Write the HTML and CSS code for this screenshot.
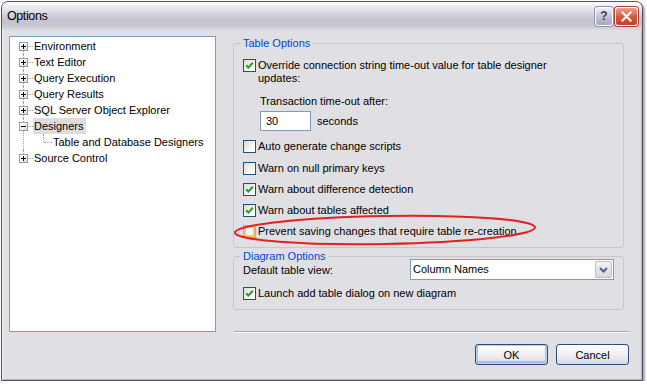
FILE: index.html
```html
<!DOCTYPE html>
<html>
<head>
<meta charset="utf-8">
<title>Options</title>
<link rel="stylesheet" href="styles.css">
</head>
<body>
<div class="window">
  <div class="titlebar">
    <span class="title">Options</span>
    <div class="caption-buttons">
      <span class="cap help">?</span>
      <span class="cap close"><svg width="11" height="11" viewBox="0 0 11 11"><path d="M1.5 1.5 L9.5 9.5 M9.5 1.5 L1.5 9.5" stroke="#fff" stroke-width="2.2" stroke-linecap="square"/></svg></span>
    </div>
  </div>
  <div class="content">
    <ul class="tree">
      <li class="node first"><span class="exp plus"></span><span class="label">Environment</span></li>
      <li class="node"><span class="exp plus"></span><span class="label">Text Editor</span></li>
      <li class="node"><span class="exp plus"></span><span class="label">Query Execution</span></li>
      <li class="node"><span class="exp plus"></span><span class="label">Query Results</span></li>
      <li class="node"><span class="exp plus"></span><span class="label">SQL Server Object Explorer</span></li>
      <li class="node open"><span class="exp minus"></span><span class="label selected">Designers</span>
        <ul class="children">
          <li class="leaf"><span class="label">Table and Database Designers</span></li>
        </ul>
      </li>
      <li class="node last"><span class="exp plus"></span><span class="label">Source Control</span></li>
    </ul>
    <div class="pane">
      <fieldset class="group table-group">
        <legend>Table Options</legend>
        <div class="check-row">
          <span class="cb checked"><svg width="11" height="11" viewBox="0 0 11 11"><path d="M2.2 5.2 L4.4 7.6 L8.8 2.8" fill="none" stroke="#21a121" stroke-width="2"/></svg></span>
          <span class="cb-label">Override connection string time-out value for table designer<br>updates:</span>
        </div>
        <div class="sub-label">Transaction time-out after:</div>
        <div class="timeout-row">
          <span class="num">30</span>
          <span class="unit">seconds</span>
        </div>
        <div class="check-row first-plain">
          <span class="cb"></span>
          <span class="cb-label">Auto generate change scripts</span>
        </div>
        <div class="check-row second-plain">
          <span class="cb"></span>
          <span class="cb-label">Warn on null primary keys</span>
        </div>
        <div class="check-row">
          <span class="cb checked"><svg width="11" height="11" viewBox="0 0 11 11"><path d="M2.2 5.2 L4.4 7.6 L8.8 2.8" fill="none" stroke="#21a121" stroke-width="2"/></svg></span>
          <span class="cb-label">Warn about difference detection</span>
        </div>
        <div class="check-row">
          <span class="cb checked"><svg width="11" height="11" viewBox="0 0 11 11"><path d="M2.2 5.2 L4.4 7.6 L8.8 2.8" fill="none" stroke="#21a121" stroke-width="2"/></svg></span>
          <span class="cb-label">Warn about tables affected</span>
        </div>
        <div class="check-row">
          <span class="cb hot"></span>
          <span class="cb-label">Prevent saving changes that require table re-creation</span>
        </div>
      </fieldset>
      <fieldset class="group diagram-group">
        <legend>Diagram Options</legend>
        <div class="select-row">
          <span class="select-label">Default table view:</span>
          <div class="select">
            <span class="select-value">Column Names</span>
            <span class="select-btn"><svg width="9" height="6" viewBox="0 0 9 6"><path d="M1 1 L4.5 4.5 L8 1" fill="none" stroke="#4d6185" stroke-width="2"/></svg></span>
          </div>
        </div>
        <div class="check-row launch-row">
          <span class="cb checked"><svg width="11" height="11" viewBox="0 0 11 11"><path d="M2.2 5.2 L4.4 7.6 L8.8 2.8" fill="none" stroke="#21a121" stroke-width="2"/></svg></span>
          <span class="cb-label">Launch add table dialog on new diagram</span>
        </div>
      </fieldset>
      <div class="separator"></div>
      <div class="buttons">
        <span class="btn default">OK</span>
        <span class="btn">Cancel</span>
      </div>
      <svg class="callout" width="396" height="300" viewBox="0 0 396 300"><ellipse cx="152" cy="194" rx="150" ry="14" transform="rotate(-1 152 194)" fill="none" stroke="#e3211e" stroke-width="2"/></svg>
    </div>
  </div>
</div>
</body>
</html>
```

FILE: styles.css
```css
* { box-sizing: border-box; }
html, body { margin: 0; padding: 0; background: #fff; }
body {
  font-family: "Liberation Sans", Arial, sans-serif;
  font-size: 11px;
  color: #000;
}

.window {
  margin: 1px 0 0 1px;
  width: 642px;
  height: 380px;
  border: 1px solid #50506a;
  border-radius: 7px 7px 0 0;
  background: #e0dfe3;
  box-shadow: 2px 2px 2px rgba(0, 0, 0, 0.35), inset 1px 0 0 #f4f4f7, inset -1px -1px 0 #b4b4c0;
  display: flex;
  flex-direction: column;
  overflow: hidden;
}

.titlebar {
  height: 28px;
  flex: none;
  display: flex;
  align-items: center;
  padding: 0 4px 0 5px;
  background: linear-gradient(to bottom, #fdfdfe 0%, #ececf1 18%, #d2d2dc 45%, #c3c3d0 65%, #c9c9d5 85%, #d9d9e1 100%);
  border-radius: 6px 6px 0 0;
}
.title {
  font-size: 12.5px;
  letter-spacing: -0.4px;
  color: #000;
  flex: 1;
}
.caption-buttons { display: flex; gap: 2px; }
.cap {
  height: 19px;
  border-radius: 3px;
  display: flex;
  align-items: center;
  justify-content: center;
}
.help {
  width: 18px;
  border: 1px solid #fff;
  background: linear-gradient(to bottom, #eeeef4, #bcbdcf 60%, #a7a9bf);
  box-shadow: 0 0 0 1px #8f91a8;
  color: #3a3d55;
  font-weight: bold;
  font-size: 12px;
}
.close {
  width: 23px;
  border: 1px solid #fff;
  background: linear-gradient(to bottom, #ee9c88, #d6563c 55%, #c2412a);
  box-shadow: 0 0 0 1px #a2403a;
}

.content {
  flex: 1;
  display: flex;
  align-items: flex-start;
  padding: 6px 0 0 7px;
}

/* tree */
.tree {
  list-style: none;
  margin: 0;
  padding: 1px 0 0 0;
  width: 207px;
  height: 296px;
  flex: none;
  background: #fff;
  border: 1px solid #7f9db9;
}
.tree ul { list-style: none; margin: 0; padding: 0; }
.node {
  position: relative;
  padding-left: 23px;
  line-height: 16px;
}
.label {
  display: inline-block;
  height: 16px;
  padding: 0 2px 0 1px;
  white-space: nowrap;
}
.label.selected { background: #dddde0; }
.node::before {
  content: "";
  position: absolute;
  left: 13px;
  top: 0;
  bottom: 0;
  border-left: 1px dotted #a0a0a0;
}
.node.first::before { top: 8px; }
.node.last::before { bottom: auto; height: 8px; }
.node::after {
  content: "";
  position: absolute;
  left: 18px;
  top: 8px;
  width: 5px;
  border-top: 1px dotted #a0a0a0;
}
.exp {
  position: absolute;
  left: 9px;
  top: 4px;
  width: 9px;
  height: 9px;
  z-index: 1;
  border: 1px solid #8e9fb0;
  background: linear-gradient(135deg, #ffffff 30%, #d9d8d2);
}
.exp::before {
  content: "";
  position: absolute;
  left: 1px;
  top: 3px;
  width: 5px;
  height: 1px;
  background: #000;
}
.exp.plus::after {
  content: "";
  position: absolute;
  left: 3px;
  top: 1px;
  width: 1px;
  height: 5px;
  background: #000;
}
.children { margin-left: -23px !important; }
.leaf {
  position: relative;
  padding-left: 42px;
  line-height: 16px;
}
.leaf::before {
  content: "";
  position: absolute;
  left: 33px;
  top: 0;
  height: 8px;
  border-left: 1px dotted #a0a0a0;
}
.leaf::after {
  content: "";
  position: absolute;
  left: 34px;
  top: 8px;
  width: 8px;
  border-top: 1px dotted #a0a0a0;
}

/* right pane */
.pane {
  position: relative;
  margin-left: 17px;
  width: 396px;
  display: flex;
  flex-direction: column;
  padding-top: 1px;
}
.group {
  margin: 0;
  width: 391px;
  border: 1px solid #c7c7cb;
  border-radius: 3px;
  min-width: 0;
}
.group legend {
  color: #0046d5;
  padding: 0 3px;
  margin-left: -3px;
  line-height: 13px;
}
.table-group { padding: 9px 9px 9px 9px; }
.diagram-group { margin-top: 2px; padding: 0 9px 9px 9px; }

.check-row {
  display: flex;
  align-items: flex-start;
  gap: 2px;
  line-height: 13px;
  margin-top: 8px;
}
.table-group .check-row:first-of-type { margin-top: 0; }
.check-row.first-plain { margin-top: 9px; }
.check-row.second-plain { margin-top: 9px; }
.cb {
  width: 13px;
  height: 13px;
  flex: none;
  border: 1px solid #1c5180;
  background: linear-gradient(135deg, #dcdcd5, #ffffff 85%);
  display: flex;
  align-items: center;
  justify-content: center;
}
.cb.hot {
  border-color: #c9a978;
  background: linear-gradient(135deg, #e6e4dc, #ffffff 85%);
  box-shadow: inset 0 0 0 2px #f9c674;
}
.cb-label { white-space: nowrap; }

.sub-label {
  margin-top: 10px;
  padding-left: 17px;
  line-height: 13px;
}
.timeout-row {
  margin-top: 3px;
  padding-left: 17px;
  display: flex;
  align-items: center;
  gap: 6px;
}
.num {
  width: 51px;
  height: 20px;
  border: 1px solid #7f9db9;
  background: #fff;
  padding-left: 5px;
  line-height: 18px;
}

.select-row {
  display: flex;
  align-items: center;
  margin-top: -4px;
}
.select {
  margin-left: auto;
  width: 204px;
  height: 21px;
  display: flex;
  border: 1px solid #7f9db9;
  background: #fff;
}
.select-value {
  flex: 1;
  padding-left: 2px;
  line-height: 19px;
}
.select-btn {
  width: 17px;
  margin: 1px;
  border: 1px solid #b9bfd0;
  border-radius: 2px;
  background: linear-gradient(to bottom, #f3f3f7, #d4d6e2);
  display: flex;
  align-items: center;
  justify-content: center;
}
.launch-row { margin-top: 7px; }

.separator {
  margin-top: 21px;
  margin-left: 1px;
  width: 395px;
  border-top: 1px solid #a7a6ad;
  border-bottom: 1px solid #ffffff;
}
.buttons {
  margin-top: 11px;
  display: flex;
  justify-content: flex-end;
  gap: 8px;
}
.btn {
  width: 73px;
  height: 21px;
  border: 1px solid #2c4a7c;
  border-radius: 3px;
  background: linear-gradient(to bottom, #ffffff, #f2f2f5 45%, #d9d9e4);
  display: flex;
  align-items: center;
  justify-content: center;
}
.btn.default { box-shadow: inset 0 0 0 1px #b9cff0, inset 0 -1px 0 2px #a9c2ea; }

.callout {
  position: absolute;
  left: 0;
  top: 0;
  overflow: visible;
  pointer-events: none;
}
```
